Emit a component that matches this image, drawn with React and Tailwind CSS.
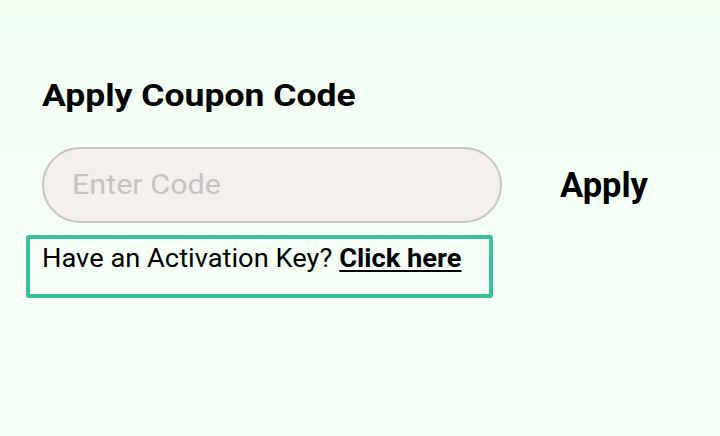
export default function App() {
  return (
    <div className="w-[720px] h-[436px] bg-gradient-to-b from-[#f1fef2] to-[#f7fff9] font-['Roboto',sans-serif] text-black overflow-hidden">
      <div className="pt-[76px] pl-[42px]">
        <h1 className="text-[31px] font-bold leading-[40px]">
          <span className="inline-block origin-left scale-x-[1.145]">Apply Coupon Code</span>
        </h1>
        <div className="mt-[31px] flex items-center">
          <div className="w-[460px] h-[76px] rounded-full border-2 border-[#c8c6c0] bg-[#f4efec] flex items-center pl-[28px]">
            <span className="inline-block origin-left scale-x-[1.09] text-[28px] text-[#c6c3c0]">Enter Code</span>
          </div>
          <button className="ml-[58px] text-[34.5px] font-bold leading-none">Apply</button>
        </div>
        <div className="-ml-[16px] mt-[12px] w-[467px] h-[63px] border-4 border-[#3cbf9f] rounded-[3px] pl-[12px] pt-[4px]">
          <p className="inline-block origin-left scale-x-[1.07] whitespace-nowrap text-[25.5px] leading-[30px]">
            Have an Activation Key?{" "}
            <a className="font-bold underline decoration-2 underline-offset-[3px]">Click here</a>
          </p>
        </div>
      </div>
    </div>
  );
}
